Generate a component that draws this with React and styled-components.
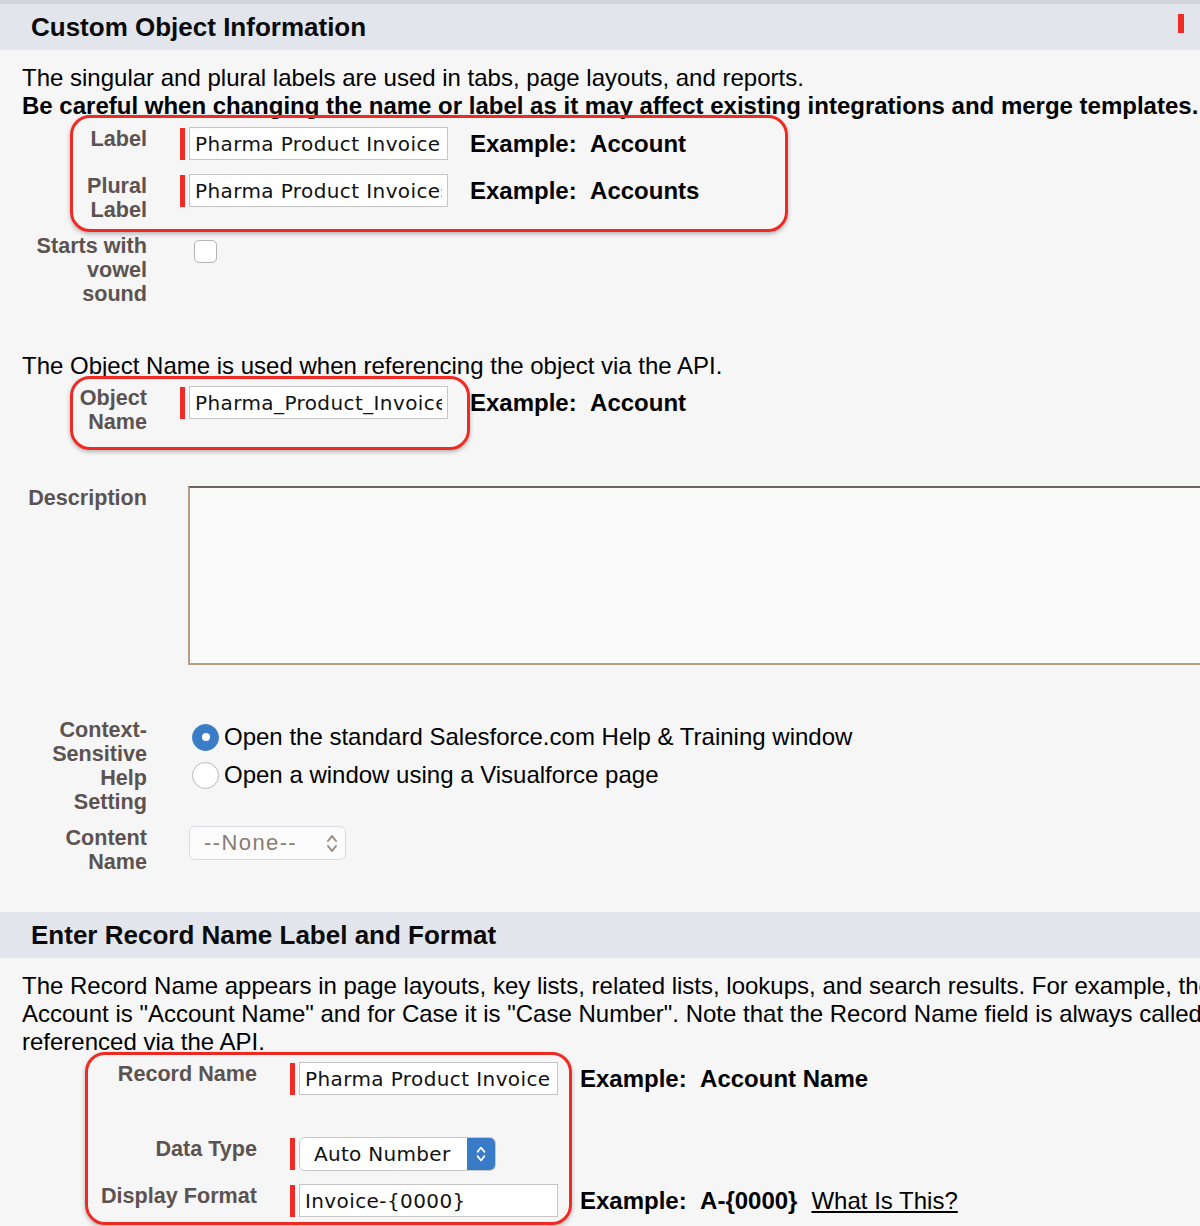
import styled, { createGlobalStyle } from "styled-components";

const GlobalStyle = createGlobalStyle`
	html, body {
		margin: 0;
		padding: 0;
		background: #f6f6f7;
	}
	body {
		font-family: "Liberation Sans", Arial, sans-serif;
	}
`;

const Page = styled.div`
	width: 1200px;
	height: 1226px;
	overflow: hidden;
	background: #f6f6f7;
	color: #000;
	border-top: 4px solid #d4d5da;
	box-sizing: border-box;
`;

const SectionHeader = styled.div`
	display: flex;
	align-items: center;
	justify-content: space-between;
	height: 46px;
	margin-top: ${ p => p.$mt || 0 }px;
	padding: 0 16px 0 31px;
	background: #e2e5ec;
	font-size: 26px;
	font-weight: bold;
	color: #0a0a0a;
`;

const RequiredMark = styled.span`
	align-self: flex-start;
	width: 6px;
	height: 19px;
	margin-top: 10px;
	background: #ee2b24;
`;

const SectionBody = styled.div`
	padding: 14px 0 0 22px;
`;

const Para = styled.p`
	margin: ${ p => p.$mt || 0 }px 0 0;
	font-size: 24px;
	line-height: 28px;
	white-space: nowrap;

	strong {
		font-weight: bold;
	}
`;

const Annotated = styled.div`
	position: relative;
	margin-top: ${ p => p.$mt || 0 }px;

	&::after {
		content: "";
		position: absolute;
		top: ${ p => p.$top }px;
		left: ${ p => p.$left }px;
		width: ${ p => p.$width }px;
		height: ${ p => p.$height }px;
		box-sizing: border-box;
		border: 3px solid #ef2a22;
		border-radius: 20px;
		box-shadow: 0 2px 4px rgba(0, 0, 0, 0.28);
		pointer-events: none;
	}
`;

const Row = styled.div`
	display: grid;
	grid-template-columns: ${ p => p.$labelW }px 1fr;
	column-gap: 33px;
	align-items: start;
	margin-top: ${ p => p.$mt || 0 }px;
`;

const Label = styled.div`
	text-align: right;
	font-size: 21.6px;
	font-weight: bold;
	line-height: 24px;
	color: #5c5351;
	white-space: nowrap;
`;

const Field = styled.div`
	display: flex;
	align-items: center;
	gap: 22px;
	min-height: 33px;
`;

const Required = styled.div`
	display: flex;
	align-items: center;
	gap: 4px;

	&::before {
		content: "";
		width: 5px;
		height: 32px;
		background: #ee2b24;
	}
`;

const TextInput = styled.input`
	width: 259px;
	height: 33px;
	box-sizing: border-box;
	margin: 0;
	padding: 0 5px;
	border: 1px solid #c6c6c6;
	border-radius: 0;
	background: #fff;
	font-family: "DejaVu Sans", sans-serif;
	font-size: 20px;
	letter-spacing: 0.4px;
	color: #111;
	outline: none;
`;

const Example = styled.div`
	font-size: 24px;
	font-weight: bold;
	white-space: nowrap;

	a {
		margin-left: 14px;
		font-weight: normal;
		color: #000;
		text-decoration: underline;
	}
`;

const Checkbox = styled.span`
	display: block;
	width: 23px;
	height: 23px;
	box-sizing: border-box;
	margin: 6px 0 0 14px;
	border: 1px solid #b3b3b3;
	border-radius: 5px;
	background: #fff;
`;

const TextArea = styled.div`
	width: 1100px;
	height: 179px;
	box-sizing: border-box;
	margin-left: 8px;
	border: 2px solid #b69d86;
	border-top-color: #6f6361;
	background: #fafafa;
`;

const RadioGroup = styled.div`
	display: flex;
	flex-direction: column;
`;

const RadioOption = styled.label`
	display: flex;
	align-items: center;
	gap: 5px;
	height: 38px;
	padding-left: 12px;
	font-size: 24px;
	white-space: nowrap;
`;

const Radio = styled.span`
	display: flex;
	align-items: center;
	justify-content: center;
	width: 27px;
	height: 27px;
	box-sizing: border-box;
	border-radius: 50%;
	border: 1px solid ${ p => p.$checked ? "#3b7cc6" : "#b9b9b9" };
	background: ${ p => p.$checked ? "#3b7cc6" : "#fff" };

	&::after {
		content: "";
		display: ${ p => p.$checked ? "block" : "none" };
		width: 8px;
		height: 8px;
		border-radius: 50%;
		background: #fff;
	}
`;

const NoneSelect = styled.div`
	display: flex;
	align-items: center;
	justify-content: space-between;
	width: 157px;
	height: 34px;
	box-sizing: border-box;
	margin-left: 9px;
	padding: 0 6px 0 14px;
	border: 1px solid #dadce4;
	border-radius: 6px;
	background: #fbfbfc;
	font-size: 22px;
	letter-spacing: 1.4px;
	color: #8b7b6d;
`;

const TypeSelect = styled.div`
	display: flex;
	align-items: stretch;
	width: 197px;
	height: 34px;
	box-sizing: border-box;
	border: 1px solid #c9c9c9;
	border-radius: 6px;
	background: #fff;
	overflow: hidden;
`;

const TypeValue = styled.span`
	flex: 1;
	display: flex;
	align-items: center;
	padding-left: 14px;
	font-family: "DejaVu Sans", sans-serif;
	font-size: 20px;
	letter-spacing: 0.3px;
	color: #111;
`;

const Stepper = styled.span`
	display: flex;
	align-items: center;
	justify-content: center;
	width: 28px;
	background: #3a7bc8;
`;

const Chevrons = ({ color, size = 14 }) => (
	<svg width={ size } height={ size * 1.5 } viewBox="0 0 14 21" fill="none"
		stroke={ color } strokeWidth="2" strokeLinecap="round" strokeLinejoin="round">
		<path d="M3 8 L7 3 L11 8" />
		<path d="M3 13 L7 18 L11 13" />
	</svg>
);

const S1 = 125;
const S2 = 235;

const App = () => (
	<>
		<GlobalStyle />
		<Page>
			<SectionHeader>
				Custom Object Information
				<RequiredMark />
			</SectionHeader>

			<SectionBody>
				<Para>
					The singular and plural labels are used in tabs, page layouts, and reports.<br />
					<strong>Be careful when changing the name or label as it may affect existing integrations and merge templates.</strong>
				</Para>

				<Annotated $mt={ 7 } $top={ -12 } $left={ 48 } $width={ 718 } $height={ 117 }>
					<Row $labelW={ S1 }>
						<Label>Label</Label>
						<Field>
							<Required><TextInput readOnly defaultValue="Pharma Product Invoice" /></Required>
							<Example>Example:&nbsp;&nbsp;Account</Example>
						</Field>
					</Row>
					<Row $labelW={ S1 } $mt={ 14 }>
						<Label>Plural<br />Label</Label>
						<Field>
							<Required><TextInput readOnly defaultValue="Pharma Product Invoices" /></Required>
							<Example>Example:&nbsp;&nbsp;Accounts</Example>
						</Field>
					</Row>
				</Annotated>

				<Row $labelW={ S1 } $mt={ 12 }>
					<Label>Starts with<br />vowel<br />sound</Label>
					<Checkbox />
				</Row>

				<Para $mt={ 46 }>The Object Name is used when referencing the object via the API.</Para>

				<Annotated $mt={ 6 } $top={ -10 } $left={ 48 } $width={ 400 } $height={ 74 }>
					<Row $labelW={ S1 }>
						<Label>Object<br />Name</Label>
						<Field>
							<Required><TextInput readOnly defaultValue="Pharma_Product_Invoice" /></Required>
							<Example>Example:&nbsp;&nbsp;Account</Example>
						</Field>
					</Row>
				</Annotated>

				<Row $labelW={ S1 } $mt={ 52 }>
					<Label>Description</Label>
					<TextArea />
				</Row>

				<Row $labelW={ S1 } $mt={ 53 }>
					<Label>Context-<br />Sensitive<br />Help<br />Setting</Label>
					<RadioGroup>
						<RadioOption><Radio $checked />Open the standard Salesforce.com Help &amp; Training window</RadioOption>
						<RadioOption><Radio />Open a window using a Visualforce page</RadioOption>
					</RadioGroup>
				</Row>

				<Row $labelW={ S1 } $mt={ 12 }>
					<Label>Content<br />Name</Label>
					<NoneSelect>
						--None--
						<Chevrons color="#9b8b7c" />
					</NoneSelect>
				</Row>
			</SectionBody>

			<SectionHeader $mt={ 38 }>
				Enter Record Name Label and Format
			</SectionHeader>

			<SectionBody>
				<Para>
					The Record Name appears in page layouts, key lists, related lists, lookups, and search results. For example, the<br />
					Account is "Account Name" and for Case it is "Case Number". Note that the Record Name field is always called<br />
					referenced via the API.
				</Para>

				<Annotated $mt={ 6 } $top={ -10 } $left={ 63 } $width={ 487 } $height={ 173 }>
					<Row $labelW={ S2 } $mt={ 0 }>
						<Label>Record Name</Label>
						<Field>
							<Required><TextInput readOnly defaultValue="Pharma Product Invoice" /></Required>
							<Example>Example:&nbsp;&nbsp;Account Name</Example>
						</Field>
					</Row>
					<Row $labelW={ S2 } $mt={ 42 }>
						<Label>Data Type</Label>
						<Field>
							<Required>
								<TypeSelect>
									<TypeValue>Auto Number</TypeValue>
									<Stepper><Chevrons color="#fff" size={ 12 } /></Stepper>
								</TypeSelect>
							</Required>
						</Field>
					</Row>
					<Row $labelW={ S2 } $mt={ 13 }>
						<Label>Display Format</Label>
						<Field>
							<Required><TextInput readOnly defaultValue="Invoice-{0000}" /></Required>
							<Example>Example:&nbsp;&nbsp;A-{ "{0000}" }<a href="#what">What Is This?</a></Example>
						</Field>
					</Row>
				</Annotated>
			</SectionBody>
		</Page>
	</>
);

export default App;
